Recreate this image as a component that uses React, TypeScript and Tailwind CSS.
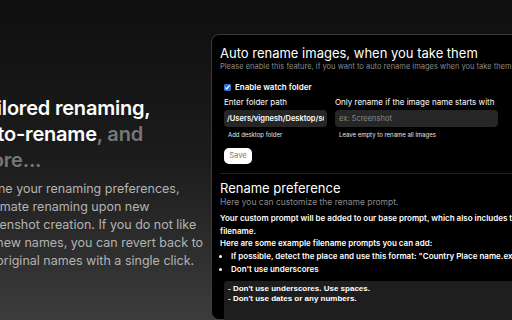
import { useState } from 'react';

const font = { fontFamily: 'Inter, "Noto Sans", sans-serif' };
const monoish = { fontFamily: '"Liberation Sans", Arial, sans-serif' };

function FeatureBlurb() {
  return (
    <div className="-ml-[26px] w-[234px] shrink-0 pt-[95px]">
      <h2 className="max-w-[225px] text-[20px] font-semibold leading-[26px] tracking-[-0.2px] text-white">
        Tailored renaming, auto-rename
        <span className="text-[#777777]">, and more...</span>
      </h2>
      <p className="mt-[7px] text-[12.5px] leading-[18px] text-[#b3b3b3]">
        Define your renaming preferences, automate renaming upon new screenshot
        creation. If you do not like the new names, you can revert back to the
        original names with a single click.
      </p>
    </div>
  );
}

function SettingsCard() {
  const [watch, setWatch] = useState(true);
  const [folder, setFolder] = useState('/Users/vignesh/Desktop/screenshots');
  const [prefix, setPrefix] = useState('');
  const [prompt, setPrompt] = useState(
    "- Don't use underscores. Use spaces.\n- Don't use dates or any numbers.",
  );

  return (
    <div className="ml-[3px] mt-[34px] w-[340px] shrink-0 rounded-[8px] border border-[#3a3a3a] bg-black px-[8px] pt-[9px]">
      <h3 className="text-[13px] leading-[18px] text-white">
        Auto rename images, when you take them
      </h3>
      <p className="whitespace-nowrap text-[7.5px] leading-[10px] text-[#8a8a8a]">
        Please enable this feature, if you want to auto rename images when you take them
      </p>

      <div className="pl-[4px]">
        <label className="mt-[10px] flex items-center gap-[4px] text-[8px] font-semibold leading-[10px] text-white">
          <input
            type="checkbox"
            checked={watch}
            onChange={(e) => setWatch(e.target.checked)}
            className="m-0 block h-[7px] w-[7px] accent-[#2f6fe0]"
          />
          Enable watch folder
        </label>

        <div className="mt-[5px] flex gap-[8px]">
          <div className="w-[103px]">
            <div className="text-[8px] leading-[10px] text-white">Enter folder path</div>
            <input
              value={folder}
              onChange={(e) => setFolder(e.target.value)}
              className="mt-[3px] block h-[17px] w-full rounded-[4px] bg-[#262626] px-[3px] text-[7.5px] font-semibold text-white outline-none"
            />
            <div className="mt-[3px] pl-[4px] text-[6px] leading-[9px] text-[#e5e5e5]">
              Add desktop folder
            </div>
          </div>
          <div className="w-[163px]">
            <div className="whitespace-nowrap text-[8px] leading-[10px] text-white">
              Only rename if the image name starts with
            </div>
            <input
              value={prefix}
              placeholder="ex: Screenshot"
              onChange={(e) => setPrefix(e.target.value)}
              className="mt-[3px] block h-[17px] w-full rounded-[4px] bg-[#262626] px-[4px] text-[7.5px] text-white outline-none placeholder:text-[#8a8a8a]"
            />
            <div className="mt-[3px] pl-[4px] text-[6px] leading-[9px] text-[#e5e5e5]">
              Leave empty to rename all images
            </div>
          </div>
        </div>

        <button className="mt-[9px] block h-[16px] w-[28px] rounded-[5px] bg-white text-[7.5px] text-[#777777]">
          Save
        </button>
      </div>

      <div className="mt-[9px] h-px bg-[#222222]" />

      <h3 className="mt-[5px] text-[13px] leading-[18px] text-white">Rename preference</h3>
      <p className="text-[8.5px] leading-[11px] text-[#8a8a8a]">
        Here you can customize the rename prompt.
      </p>

      <div className="mt-[4px] text-[8px] font-semibold leading-[12.5px] text-white">
        <p className="whitespace-nowrap">
          Your custom prompt will be added to our base prompt, which also includes the
        </p>
        <p>filename.</p>
        <p>Here are some example filename prompts you can add:</p>
        <ul className="list-disc pl-[11px] leading-[13px]">
          <li className="whitespace-nowrap">
            If possible, detect the place and use this format: "Country Place name.extension"
          </li>
          <li>Don't use underscores</li>
        </ul>
      </div>

      <div className="pl-[4px]">
        <textarea
          value={prompt}
          onChange={(e) => setPrompt(e.target.value)}
          style={monoish}
          className="mt-[5px] block h-[60px] w-full resize-none rounded-[4px] bg-[#1e1e1e] px-[4px] pt-[3px] text-[8px] font-semibold leading-[10px] text-white outline-none"
        />
      </div>
    </div>
  );
}

export default function App() {
  return (
    <div
      style={font}
      className="flex h-[320px] w-[512px] overflow-hidden bg-gradient-to-b from-[#0f0f0f] via-[#1c1c1c] to-[#3c3c3c]"
    >
      <FeatureBlurb />
      <SettingsCard />
    </div>
  );
}
